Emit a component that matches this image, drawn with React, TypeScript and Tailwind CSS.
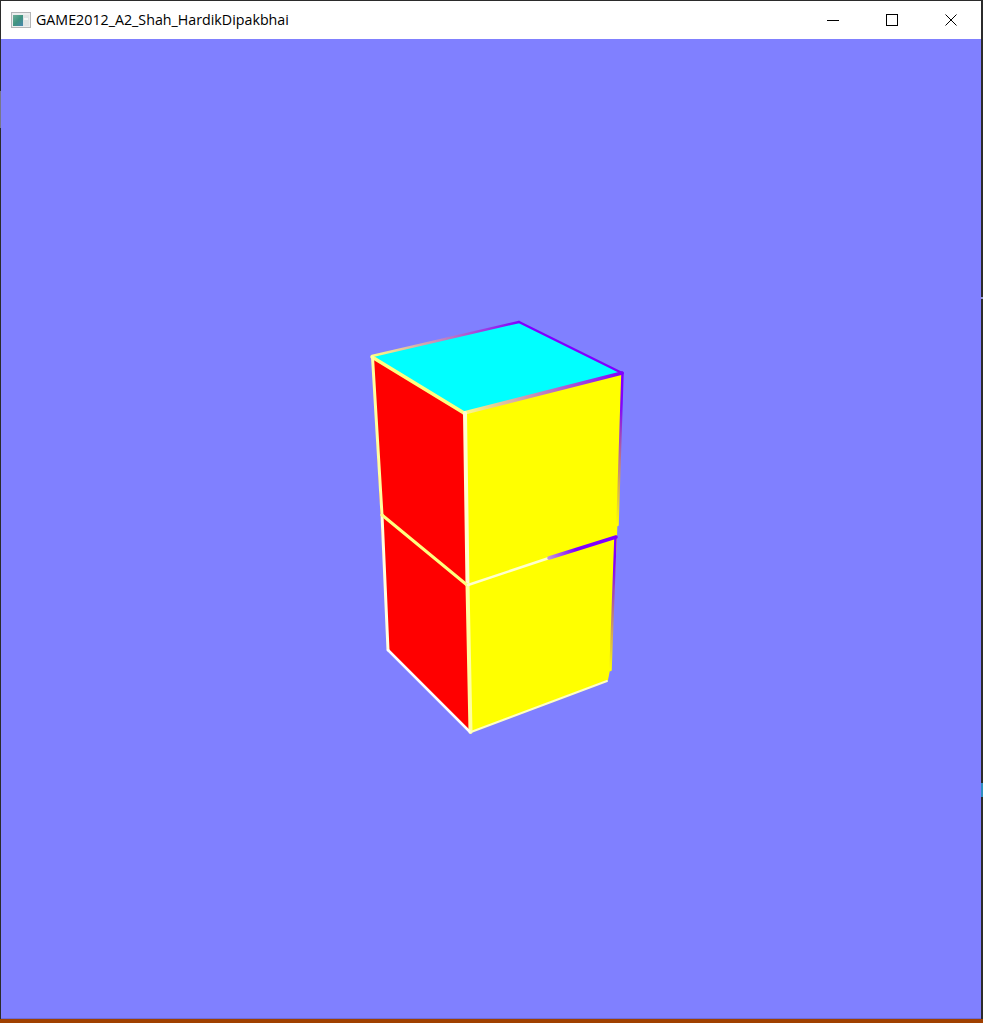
import React from "react";

const PURPLE = "#8000ff";

function TitleIcon() {
  return (
    <svg width="20" height="16" viewBox="0 0 20 16" className="shrink-0">
      <defs>
        <linearGradient id="iconBg" x1="0" y1="0" x2="1" y2="1">
          <stop offset="0" stopColor="#6fae9a" />
          <stop offset="0.5" stopColor="#3f9480" />
          <stop offset="1" stopColor="#4a86b0" />
        </linearGradient>
      </defs>
      <rect x="0.5" y="0.5" width="19" height="15" fill="#eceeee" stroke="#b4b6b8" />
      <rect x="2" y="3" width="10" height="11" fill="url(#iconBg)" />
      <rect x="12" y="3" width="6" height="11" fill="#dfe4e4" />
      <rect x="13" y="6" width="4" height="2" fill="#f6f8f8" />
    </svg>
  );
}

function WindowControls() {
  return (
    <div className="flex h-full pr-px">
      <div className="flex h-full w-[59px] items-center justify-center">
        <svg width="12" height="12" viewBox="0 0 12 12">
          <path d="M0 6.5H12" stroke="#000" strokeWidth="1" />
        </svg>
      </div>
      <div className="flex h-full w-[59px] items-center justify-center">
        <svg width="12" height="12" viewBox="0 0 12 12">
          <rect x="0.5" y="0.5" width="11" height="11" fill="none" stroke="#000" />
        </svg>
      </div>
      <div className="flex h-full w-[59px] items-center justify-center">
        <svg width="12" height="12" viewBox="0 0 12 12">
          <path d="M0.5 0.5L11.5 11.5M11.5 0.5L0.5 11.5" stroke="#000" strokeWidth="1" />
        </svg>
      </div>
    </div>
  );
}

// page coordinates are kept in the viewBox, the canvas starts at y=39
function Boxes() {
  return (
    <svg className="h-full w-full" viewBox="1 39 980 979" preserveAspectRatio="none">
      <defs>
        <linearGradient id="topBack" gradientUnits="userSpaceOnUse" x1="372" y1="356" x2="519" y2="322">
          <stop offset="0" stopColor="#ffff80" />
          <stop offset="1" stopColor={PURPLE} />
        </linearGradient>
        <linearGradient id="topFront" gradientUnits="userSpaceOnUse" x1="464" y1="413" x2="622" y2="373">
          <stop offset="0" stopColor="#ffff80" />
          <stop offset="1" stopColor={PURPLE} />
        </linearGradient>
        <linearGradient id="rightUpper" gradientUnits="userSpaceOnUse" x1="622" y1="373" x2="617.5" y2="525">
          <stop offset="0" stopColor={PURPLE} />
          <stop offset="0.2" stopColor={PURPLE} />
          <stop offset="1" stopColor="#ffff00" />
        </linearGradient>
        <linearGradient id="rightLower" gradientUnits="userSpaceOnUse" x1="615" y1="537" x2="610" y2="670">
          <stop offset="0" stopColor={PURPLE} />
          <stop offset="0.2" stopColor={PURPLE} />
          <stop offset="1" stopColor="#ffff00" />
        </linearGradient>
        <linearGradient id="seam" gradientUnits="userSpaceOnUse" x1="549" y1="558" x2="616" y2="537">
          <stop offset="0" stopColor="#c090e0" />
          <stop offset="0.4" stopColor={PURPLE} />
          <stop offset="1" stopColor={PURPLE} />
        </linearGradient>
      </defs>

      <polygon points="372,356 519,322 622,373 464,413" fill="#00ffff" />
      <polygon points="372,356 464,413 470,732 388,650" fill="#ff0000" />
      <polygon points="464,413 622,373 617,537 610,670 608,680 470,732" fill="#ffff00" />

      <g fill="none" strokeLinecap="round" strokeLinejoin="round">
        <path d="M372 356L519 322" stroke="url(#topBack)" strokeWidth="2.5" />
        <path d="M519 322L622 373" stroke={PURPLE} strokeWidth="2.5" />
        <path d="M464 413L622 373" stroke="url(#topFront)" strokeWidth="3.5" />
        <path d="M372 357L464 413" stroke="#ffff80" strokeWidth="3.5" />
        <path d="M372.5 357L382 515" stroke="#ffffa0" strokeWidth="3" />
        <path d="M382 515L388 650" stroke="#ffffe0" strokeWidth="3" />
        <path d="M465 413L467.5 585" stroke="#ffffd0" strokeWidth="4" />
        <path d="M467.5 585L470.5 732" stroke="#ffffa0" strokeWidth="4" />
        <path d="M382 515L467 585" stroke="#ffff80" strokeWidth="3" />
        <path d="M468 585L549 558" stroke="#ffffd0" strokeWidth="2.5" />
        <path d="M549 558L616 537" stroke="url(#seam)" strokeWidth="3.5" />
        <path d="M622.5 373L617.5 525" stroke="url(#rightUpper)" strokeWidth="2.5" />
        <path d="M615.5 537L610.5 670" stroke="url(#rightLower)" strokeWidth="2.5" />
        <path d="M388 650L470 732" stroke="#ffffff" strokeWidth="2.5" />
        <path d="M471 732L607 681" stroke="#ffffc0" strokeWidth="2" />
      </g>
    </svg>
  );
}

export default function App() {
  return (
    <div className="relative flex h-[1023px] w-[983px] flex-col overflow-hidden bg-[#a04000]">
      <div className="flex h-[1019px] flex-col border-t border-r-2 border-l border-[#2b2b2b] bg-[#8080ff]">
        <div className="flex h-[38px] shrink-0 items-center justify-between bg-white">
          <div className="flex items-center gap-[5px] pl-[10px]">
            <TitleIcon />
            <span className="font-['Open_Sans',sans-serif] text-[14.25px] leading-none text-black">
              GAME2012_A2_Shah_HardikDipakbhai
            </span>
          </div>
          <WindowControls />
        </div>
        <div className="min-h-0 flex-1 border-b border-[#6c6cd8]">
          <Boxes />
        </div>
      </div>
      {/* bits of the desktop showing through the window edge */}
      <div className="absolute top-[91px] left-0 h-[37px] w-px bg-[#77778a]" />
      <div className="absolute top-[297px] right-0 h-[2px] w-[2px] bg-[#9a9ad0]" />
      <div className="absolute top-[783px] right-0 h-[14px] w-[2px] bg-[#2f8fc0]" />
    </div>
  );
}
